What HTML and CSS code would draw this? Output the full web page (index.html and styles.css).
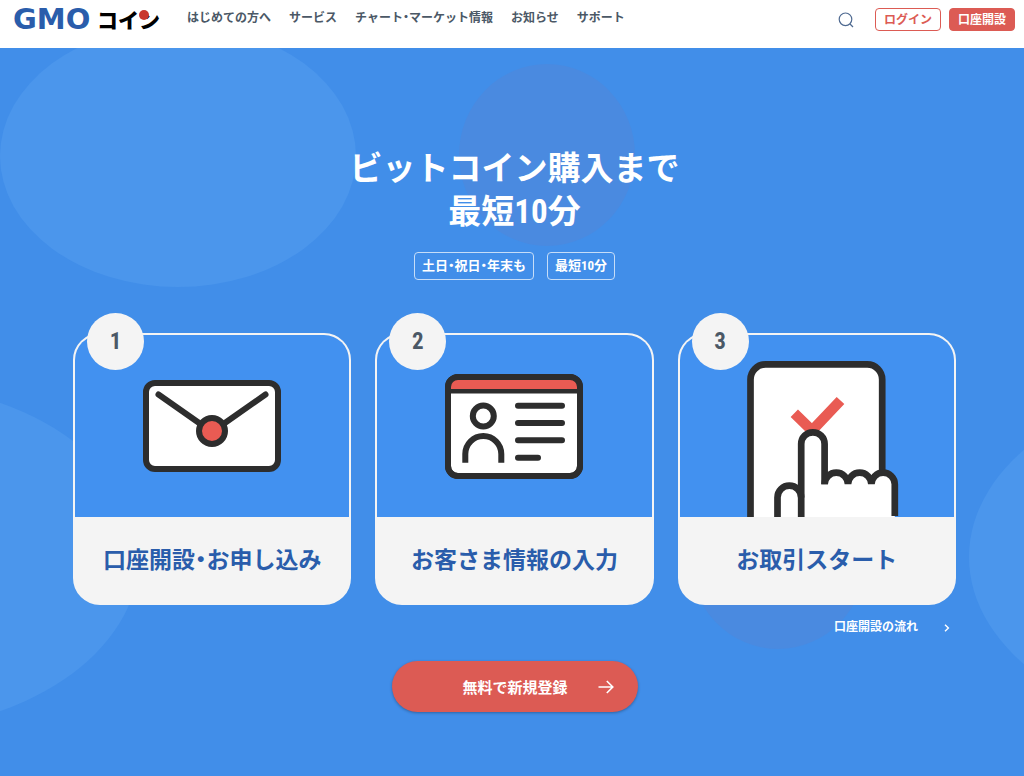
FILE: index.html
```html
<!DOCTYPE html>
<html lang="ja">
  <head>
    <meta charset="UTF-8" />
    <meta name="viewport" content="width=device-width, initial-scale=1.0" />
    <title>GMOコイン</title>
    <link rel="stylesheet" href="styles.css">
  </head>
  <body>
    <header class="header">
      <a class="logo" href="#"><span class="logo-gmo">GMO</span><span class="logo-coin">コイン</span></a>
      <nav class="nav">
        <a href="#">はじめての方へ</a>
        <a href="#">サービス</a>
        <a href="#">チャート<span class="dot">・</span>マーケット情報</a>
        <a href="#">お知らせ</a>
        <a href="#">サポート</a>
      </nav>
      <div class="actions">
        <button class="search" type="button" aria-label="検索">
          <svg width="16" height="16" viewBox="0 0 16 16" fill="none" stroke="#4f6a91" stroke-width="1.2">
            <circle cx="7.5" cy="7.3" r="6.3" />
            <path d="M12 12l3 3" />
          </svg>
        </button>
        <a class="btn btn-line" href="#">ログイン</a>
        <a class="btn btn-red" href="#">口座開設</a>
      </div>
    </header>

    <main class="hero">
      <!-- 背景の円 -->
      <div class="bg">
        <span class="circle light c1"></span>
        <span class="circle light c2"></span>
        <span class="circle light c3"></span>
        <span class="circle dark c4"></span>
        <span class="circle dark c5"></span>
      </div>

      <h1>ビットコイン購入まで<br>最短10分</h1>
      <div class="tags">
        <span class="tag">土日<span class="dot">・</span>祝日<span class="dot">・</span>年末も</span>
        <span class="tag">最短10分</span>
      </div>

      <!-- ステップ -->
      <ol class="steps">
        <li class="card">
          <span class="num">1</span>
          <div class="art">
            <svg width="138" height="92" viewBox="0 0 138 92" fill="none" stroke="#2d2d2d" stroke-width="6">
              <rect x="3" y="3" width="132" height="86" rx="9" fill="#fff" />
              <path d="M15.5 14.5L69 52l53.5-37.5" stroke-linecap="round" />
              <circle cx="69" cy="51" r="13" fill="#e95b53" />
            </svg>
          </div>
          <h2>口座開設<span class="dot">・</span>お申し込み</h2>
        </li>
        <li class="card">
          <span class="num">2</span>
          <div class="art">
            <svg width="138" height="105" viewBox="0 0 138 105" fill="none" stroke="#2d2d2d" stroke-width="6">
              <rect x="3" y="3" width="132" height="99" rx="10" fill="#fff" />
              <path d="M5 17V13a8 8 0 0 1 8-8h112a8 8 0 0 1 8 8v4z" fill="#e95b53" stroke="none" />
              <path d="M4 17.2h130" stroke-width="4.5" />
              <rect x="3" y="3" width="132" height="99" rx="10" />
              <circle cx="38.3" cy="42" r="10.5" />
              <path d="M20.3 88.7V80a18 18 0 0 1 36 0v8.7" />
              <path d="M73 31.7h44M73 49h44M73 66.3h44M73 83.7h20" stroke-linecap="round" />
            </svg>
          </div>
          <h2>お客さま情報の入力</h2>
        </li>
        <li class="card">
          <span class="num">3</span>
          <div class="art art-bottom">
            <svg width="164" height="156" viewBox="0 0 164 156" fill="none" stroke="#2d2d2d" stroke-width="6.7">
              <path d="M15.5 160V18.4a15 15 0 0 1 15-15h101.7a15 15 0 0 1 15 15V160" fill="#fff" />
              <path d="M59.3 52.3L77 69.5l28.5-30" stroke="#e95b53" stroke-width="10.5" />
              <path d="M42.5 160v-23.5a11.8 11.8 0 0 1 23.7 0V83a11.7 11.7 0 0 1 23.4 0v40h70.200V160z" fill="#fff" stroke="none" />
              <path d="M89.6 123a11.7 11.7 0 0 1 23.4 0a11.7 11.7 0 0 1 23.4 0a11.7 11.7 0 0 1 23.4 0z" fill="#fff" stroke="none" />
              <path d="M42.5 160v-23.5a11.8 11.8 0 0 1 23.7 0" />
              <path d="M66.2 160V83a11.7 11.7 0 0 1 23.4 0v40.3" />
              <path d="M89.6 123.3a11.7 11.7 0 0 1 23.4 0M113 123.3a11.7 11.7 0 0 1 23.4 0M136.4 123.3a11.7 11.7 0 0 1 23.4 0V155" />
            </svg>
          </div>
          <h2>お取引スタート</h2>
        </li>
      </ol>

      <a class="flow" href="#">
        口座開設の流れ
        <svg width="6" height="8" viewBox="0 0 6 8" fill="none" stroke="#fff" stroke-width="1.4">
          <path d="M1 .8L4.4 4 1 7.2" />
        </svg>
      </a>

      <a class="cta" href="#">
        <span>無料で新規登録</span>
        <svg width="16" height="14" viewBox="0 0 16 14" fill="none" stroke="#fff" stroke-width="1.6">
          <path d="M.5 7h14M8.8 1l6 6-6 6" />
        </svg>
      </a>
    </main>
  </body>
</html>
```
FILE: styles.css
```css
* {
  box-sizing: border-box;
}

body {
  margin: 0;
  min-height: 100vh;
  display: flex;
  flex-direction: column;
  font-family: "Roboto Condensed", "Liberation Sans Narrow", "Noto Sans CJK JP", sans-serif;
  font-weight: 700;
  color: #4b5866;
  background: #418ee9;
}

a {
  color: inherit;
  text-decoration: none;
}

/* 中黒を半角幅にする */
.dot {
  font-feature-settings: "halt";
}

.header {
  display: flex;
  align-items: flex-start;
  padding: 8px 9px 17px 13px;
  background: #fff;
}

.logo {
  display: flex;
  align-items: center;
  justify-content: space-between;
  width: 147px;
  height: 23px;
  margin-right: 27px;
  white-space: nowrap;
}

.logo-gmo {
  font-family: "DejaVu Sans", sans-serif;
  font-size: 29px;
  line-height: 23px;
  color: #2a5dab;
}

.logo-coin {
  position: relative;
  font-family: "Noto Sans CJK JP", sans-serif;
  font-weight: 900;
  font-size: 21px;
  line-height: 23px;
  color: #000;
}

.logo-coin::after {
  content: "";
  position: absolute;
  left: 42px;
  top: 2px;
  width: 10px;
  height: 10px;
  border-radius: 50%;
  background: #c8372f;
}

.nav {
  display: flex;
  gap: 18px;
  font-size: 12px;
  line-height: 21px;
  white-space: nowrap;
}

.actions {
  display: flex;
  align-items: center;
  margin-left: auto;
}

.search {
  display: flex;
  margin-right: 21px;
  padding: 0;
  border: 0;
  background: none;
}

.btn {
  width: 66px;
  height: 23px;
  border: 1px solid #dc5b54;
  border-radius: 4px;
  font-size: 12px;
  line-height: 23px;
  text-align: center;
}

.btn-line {
  margin-right: 8px;
  color: #dc5b54;
}

.btn-red {
  background: #dc5b54;
  color: #fff;
}

.hero {
  position: relative;
  flex: 1;
  display: flex;
  flex-direction: column;
  align-items: center;
  padding: 99px 68px 64px 73px;
  overflow: hidden;
  color: #fff;
}

.hero > * {
  position: relative;
}

.hero > .bg {
  position: absolute;
  inset: 0;
}

.circle {
  position: absolute;
  border-radius: 50%;
}

.light {
  background: #4b96ec;
}

.dark {
  width: 176px;
  height: 182px;
  background: #4a8ae0;
}

.c1 {
  left: 0;
  top: -23px;
  width: 356px;
  height: 262px;
}

.c2,
.c3 {
  top: 335px;
  width: 518px;
  height: 348px;
}

.c2 {
  left: -379px;
}

.c3 {
  right: -463px;
}

.c4 {
  left: 459px;
  top: 16px;
}

.c5 {
  left: 690px;
  top: 419px;
}

h1 {
  margin: 0 0 19px;
  font-size: 33px;
  line-height: 43px;
  text-align: center;
}

.tags {
  display: flex;
  gap: 13px;
  margin-bottom: 53px;
}

.tag {
  height: 28px;
  padding: 0 7px;
  border: 1px solid #c6ddf8;
  border-radius: 4px;
  font-size: 13px;
  line-height: 26px;
}

.steps {
  display: grid;
  grid-template-columns: repeat(3, 1fr);
  gap: 24px;
  width: 100%;
  margin: 0;
  padding: 0;
  list-style: none;
}

.card {
  position: relative;
  border: 2px solid #f4f4f4;
  border-radius: 27px;
  background: #f4f4f4;
}

.num {
  position: absolute;
  left: 12px;
  top: -22px;
  width: 57px;
  height: 57px;
  border-radius: 50%;
  background: #f4f4f4;
  font-size: 23px;
  line-height: 58px;
  text-align: center;
  color: #4b5866;
}

.art {
  display: flex;
  justify-content: center;
  align-items: center;
  height: 182px;
  border-radius: 25px 25px 0 0;
  background: #4291f0;
}

.art-bottom {
  align-items: flex-end;
}

.card h2 {
  height: 86px;
  margin: 0;
  font-size: 23px;
  line-height: 88px;
  text-align: center;
  color: #2a5dab;
}

.flow {
  display: flex;
  align-items: center;
  align-self: flex-end;
  gap: 26px;
  margin: 12px 6px 23px 0;
  font-size: 12px;
  line-height: 21px;
}

.cta {
  display: flex;
  align-items: center;
  justify-content: flex-end;
  gap: 30px;
  width: 246px;
  height: 51px;
  padding-right: 24px;
  border-radius: 26px;
  background: #dc5b54;
  box-shadow: 0 1px 3px rgba(0, 0, 0, 0.3);
  font-size: 15px;
}
```
